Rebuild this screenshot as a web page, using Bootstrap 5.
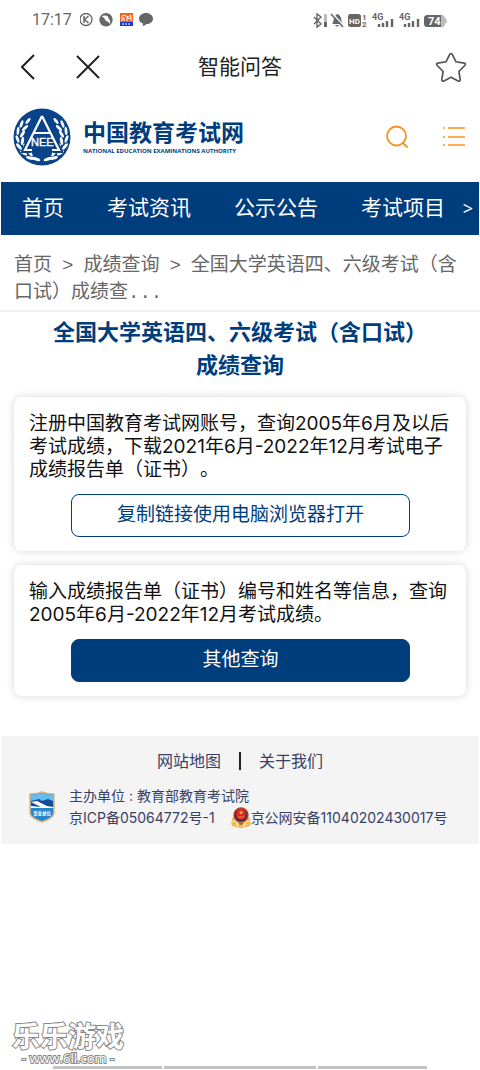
<!DOCTYPE html>
<html lang="zh-CN">
<head>
<meta charset="utf-8">
<meta name="viewport" content="width=device-width, initial-scale=1">
<title>智能问答</title>
<link href="https://cdn.jsdelivr.net/npm/bootstrap@5.3.0/dist/css/bootstrap.min.css" rel="stylesheet">
<style>
:root { --brand: #003d7d; --accent: #f7931e; }
body { font-family: Inter, "Noto Sans CJK SC", sans-serif; color: #111; background: #fff; text-spacing-trim: space-all; }
a { text-decoration: none; }
svg { display: block; flex: none; }
.icon-btn { background: none; border: 0; padding: 0; }
.status-bar { height: 38px; padding: 2px 32px 0; color: #666; font: 16px/1 Roboto, sans-serif; }
.title-bar { height: 58px; padding: 0 13px; }
.page-name { font-size: 21px; line-height: 30px; color: #222; }
.side-box { width: 100px; gap: 37px; }
.brand-bar { height: 86px; padding: 0 14px 4px 13px; }
.brand-link, .brand-link:hover { color: var(--brand); gap: 12px; }
.brand-cn { font-size: 23px; line-height: 28px; font-weight: 700; }
.brand-en { font: 700 6px/9px "Open Sans", sans-serif; white-space: nowrap; }
.main-nav { background: var(--brand); height: 53px; margin: 0 1px; padding: 0 6px 2px 21px; font-size: 21px; white-space: nowrap; }
.main-nav a { color: #fff; }
.nav-items { gap: 43px; }
.nav-more { font-size: 18px; line-height: 24px; font-family: "Noto Sans", sans-serif; color: #fff; }
.crumbs { padding: 18px 14px 3px; font: 19px/27px "Liberation Mono", "Noto Sans CJK SC", monospace; color: #666; border-bottom: 2px solid #f0f0f0; }
.crumbs a { color: inherit; }
.crumbs .sep { margin: 0 10px; }
.headline { font-size: 22px; line-height: 33px; font-weight: 700; color: var(--brand); padding: 0 50px; margin: 4px 0 15px; }
.query-card { border: 0; border-radius: 8px; box-shadow: 0 0 8px rgba(0,0,0,.17); margin: 0 14px 14px; padding: 15px 14px 14px 15px; font-size: 19px; line-height: 23px; }
.query-card p { margin: 0 0 13px; }
.query-btn { --bs-btn-border-radius: 8px; --bs-btn-color: var(--brand); --bs-btn-border-color: var(--brand); --bs-btn-hover-color: #fff; --bs-btn-hover-bg: var(--brand); width: 80%; height: 43px; padding: 0 0 2px; font-size: 19px; line-height: 36px; margin: 0 auto; }
.query-btn.solid { background: var(--brand); color: #fff; }
.site-footer { background: #f4f4f4; margin: 26px 1px 0; padding: 13px 28px 15px; font-size: 14px; line-height: 22px; color: #374166; }
.site-footer a { color: inherit; }
.foot-links { font-size: 16px; line-height: 24px; gap: 18px; margin-bottom: 12px; }
.foot-bar { width: 2px; height: 18px; background: #222; }
.foot-org { gap: 14px; }
.watermark { width: 112px; margin-left: 12px; color: #fff; white-space: nowrap; paint-order: stroke fill; -webkit-text-stroke: 2px #888; }
.mark-cn { font-size: 28px; line-height: 28px; font-weight: 700; }
.mark-en { font: 400 13px/15px "Open Sans", sans-serif; }
.home-strips { gap: 2px; margin: 0 53px 1px; }
.home-strips span { height: 3px; background: #c2c2c2; flex: 5 1 0; }
.home-strips .wide { flex-grow: 7; }
</style>
</head>
<body class="d-flex flex-column min-vh-100">
<div class="status-bar d-flex align-items-center justify-content-between">
  <div class="d-flex align-items-center gap-2">
    <span>17:17</span>
    <svg width="75" height="15" viewBox="0 0 75 15">
      <circle cx="6" cy="6.5" r="6" fill="none" stroke="#666" stroke-width="1.3"/>
      <path d="M4 3v7M8.500 3L4.500 6.500 8.500 10" fill="none" stroke="#666" stroke-width="1.5"/>
      <circle cx="26" cy="6.700" r="6.700" fill="#666"/>
      <path d="M21.500 3q4-1 6 0l1 2q2 2 1.500 6-2-3-4-3-1-3-4.500-5z" fill="#fff"/>
      <path d="M40 0h13v9H40z" fill="#f4601c"/><path d="M40 9h13v4H40z" fill="#1739d6"/>
      <path d="M42 8V3q2-2 4 0t5-1v6M44 8V4m3 4V4l2 2 2-2" stroke="#fff" stroke-width="1" fill="none"/>
      <path d="M42 11h9" stroke="#fff" stroke-dasharray="2 1"/>
      <path d="M66 0c4 0 7 2.500 7 5.700S70 11 66.500 11c-1 1.300-2.500 2-4.500 2 1-.8 1.200-1.600 1-2.500-2.500-.8-4-2.600-4-4.800C59 2.500 62 0 66 0z" fill="#666"/>
    </svg>
  </div>
  <svg width="136" height="17" viewBox="0 0 136 17" font-family="Roboto, sans-serif" font-weight="700">
    <path d="M2 5l7 7-4 3V2l4 3-7 7" fill="none" stroke="#666" stroke-width="1.400"/>
    <path d="M12 2h3v8h-3z" fill="#bbb"/><path d="M12 10h3v5h-3z" fill="#666"/>
    <path d="M20 12c2-1 1-7 4-9 1-1.500 2-1.500 3 0 3 2 2 8 4 9zM23 13h4q-2 3-4 0" fill="#666"/>
    <path d="M20 1l12 13" stroke="#fff" stroke-width="1.500"/><path d="M19 2l12 13" stroke="#666" stroke-width="1.500"/>
    <rect x="36" y="2" width="13" height="13" rx="2.500" fill="#666"/>
    <text x="37" y="12" font-size="8" fill="#fff">HD</text>
    <text x="50" y="8" font-size="8" fill="#666">1</text><text x="50" y="15" font-size="8" fill="#666">2</text>
    <text x="60" y="8" font-size="9" fill="#666">4G</text><text x="87" y="8" font-size="9" fill="#666">4G</text>
    <path d="M67 15v-3M71 15v-4M75 15V9M80 15V7M93 15v-3M97 15v-4M101 15V9M106 15V7" stroke="#666" stroke-width="2.400"/>
    <rect x="112" y="3" width="21" height="12" rx="3.500" fill="#bbb"/><path d="M133 6q4 3 0 6z" fill="#bbb"/>
    <path d="M115.500 3H129v12h-13.500a3.500 3.500 0 0 1-3.500-3.500v-5A3.500 3.500 0 0 1 115.500 3z" fill="#666"/>
    <text x="116" y="13" font-size="11" fill="#fff">74</text>
  </svg>
</div>

<header class="title-bar d-flex align-items-center justify-content-between">
  <div class="side-box d-flex align-items-center ps-2">
    <button class="icon-btn" aria-label="返回"><svg width="17" height="28" viewBox="0 0 17 28"><path d="M13 2L1 14l12 12" fill="none" stroke="#222" stroke-width="2"/></svg></button>
    <button class="icon-btn" aria-label="关闭"><svg width="26" height="26" viewBox="0 0 26 26"><path d="M2 2l22 22M24 2L2 24" fill="none" stroke="#222" stroke-width="2"/></svg></button>
  </div>
  <span class="page-name">智能问答</span>
  <div class="side-box d-flex justify-content-end">
    <button class="icon-btn" aria-label="收藏"><svg width="32" height="32" viewBox="0 0 32 32"><path d="M14.700 3.500q1.300-2 2.600 0l3.700 7.300 8.200 1.300q2 .6.600 2.400l-5.900 6 1.300 8q0 2.200-2.200 1.500L16 26.300 9 30q-2.200.7-2.200-1.500l1.300-8-5.900-6q-1.400-1.800.6-2.400l8.200-1.300z" fill="none" stroke="#555" stroke-width="1.700"/></svg></button>
  </div>
</header>

<div class="brand-bar d-flex align-items-center justify-content-between">
  <a href="#" class="brand-link d-flex align-items-center">
    <svg width="58" height="58" viewBox="0 0 58 58">
      <defs><g id="leaves" fill="#fff">
        <ellipse cx="23" cy="51" rx="4.500" ry="1.500" transform="rotate(20 23 51)"/>
        <ellipse cx="17" cy="50" rx="4" ry="1.500" transform="rotate(15 17 50)"/>
        <ellipse cx="17" cy="45" rx="4" ry="1.500" transform="rotate(55 17 45)"/>
        <ellipse cx="10.500" cy="45" rx="4" ry="1.500" transform="rotate(30 10.500 45)"/>
        <ellipse cx="12" cy="39.500" rx="4" ry="1.500" transform="rotate(75 12 39.500)"/>
        <ellipse cx="6" cy="38.500" rx="4" ry="1.500" transform="rotate(50 6 38.500)"/>
        <ellipse cx="9.500" cy="33" rx="4" ry="1.500" transform="rotate(100 9.500 33)"/>
        <ellipse cx="4.500" cy="31" rx="4" ry="1.400" transform="rotate(70 4.500 31)"/>
        <ellipse cx="9.500" cy="26" rx="4" ry="1.500" transform="rotate(120 9.500 26)"/>
        <ellipse cx="5" cy="23" rx="4" ry="1.400" transform="rotate(95 5 23)"/>
        <ellipse cx="12" cy="20" rx="4" ry="1.500" transform="rotate(135 12 20)"/>
        <ellipse cx="8.500" cy="16" rx="4" ry="1.400" transform="rotate(110 8.500 16)"/>
        <ellipse cx="15" cy="13" rx="3.500" ry="1.400" transform="rotate(130 15 13)"/>
      </g></defs>
      <circle cx="29" cy="29" r="28.500" fill="#0b438a"/>
      <use href="#leaves"/><use href="#leaves" transform="matrix(-1 0 0 1 58 0)"/>
      <path d="M29 8L12 42h6M29 8l17 34h-6M22 26h14" fill="none" stroke="#0b438a" stroke-width="6"/>
      <path d="M29 8L12 42h7M29 8l17 34h-7M21 25h16" fill="none" stroke="#fff" stroke-width="2.200"/>
      <text x="18" y="38" font-family="Liberation Sans, sans-serif" font-size="11" fill="#fff" stroke="#fff" stroke-width=".4">NEE</text>
    </svg>
    <span class="d-flex flex-column"><span class="brand-cn">中国教育考试网</span><span class="brand-en">NATIONAL EDUCATION EXAMINATIONS AUTHORITY</span></span>
  </a>
  <div class="d-flex align-items-center gap-4">
    <button class="icon-btn me-2" aria-label="搜索"><svg width="24" height="24" viewBox="0 0 24 24"><circle cx="10.500" cy="11" r="9.500" fill="none" stroke="#f7931e" stroke-width="1.800"/><path d="M16.500 17.500l5 5" stroke="#f7931e" stroke-width="1.800"/></svg></button>
    <button class="icon-btn" aria-label="菜单"><svg width="24" height="22" viewBox="0 0 24 22"><path d="M6 2h17M6 11h17M6 19h17M1 2h2M1 11h2M1 19h2" stroke="#f7931e" stroke-width="1.500"/></svg></button>
  </div>
</div>

<nav class="main-nav d-flex align-items-center justify-content-between">
  <div class="nav-items d-flex"><a href="#">首页</a><a href="#">考试资讯</a><a href="#">公示公告</a><a href="#">考试项目</a></div>
  <button class="icon-btn nav-more" aria-label="更多栏目">&gt;</button>
</nav>

<div class="crumbs"><a href="#">首页</a><span class="sep">&gt;</span><a href="#">成绩查询</a><span class="sep">&gt;</span><span>全国大学英语四、六级考试（含</span><span>口试）成绩查...</span></div>

<main>
  <h1 class="headline text-center">全国大学英语四、六级考试（含口试）<br>成绩查询</h1>
  <section class="card query-card">
    <p>注册中国教育考试网账号，查询2005年6月及以后考试成绩，下载2021年6月-2022年12月考试电子成绩报告单（证书）。</p>
    <button class="btn query-btn">复制链接使用电脑浏览器打开</button>
  </section>
  <section class="card query-card">
    <p>输入成绩报告单（证书）编号和姓名等信息，查询2005年6月-2022年12月考试成绩。</p>
    <button class="btn query-btn solid">其他查询</button>
  </section>
</main>

<footer class="site-footer">
  <div class="foot-links d-flex justify-content-center align-items-center"><a href="#">网站地图</a><span class="foot-bar"></span><a href="#">关于我们</a></div>
  <div class="foot-org d-flex align-items-center">
    <svg width="26" height="32" viewBox="0 0 26 32">
      <path d="M1 3q7 0 12-2 5 2 12 2v19q0 5-12 9Q1 27 1 22z" fill="#2584cb" stroke="#dfb98a" stroke-width="1.600"/>
      <path d="M2 4q6 0 11-2 5 2 11 2v7H2z" fill="#64bdf0"/>
      <path d="M2 10l8-2 3 2 6-2 5 2v7H2z" fill="#174c98"/><path d="M2 11l6-1 10 5 6 1v1H2v-2l10 1-6-3z" fill="#fff"/>
      <text x="4" y="24" font-family="Noto Sans CJK SC, sans-serif" font-size="4.500" font-weight="700" fill="#fff">事业单位</text>
    </svg>
    <div>
      <div>主办单位 : 教育部教育考试院</div>
      <div class="d-flex flex-wrap align-items-center">
        <a href="#" class="me-3">京ICP备05064772号-1</a>
        <a href="#" class="d-flex align-items-center"><svg width="20" height="22" viewBox="0 0 20 22">
          <path d="M3 9Q-1 14 1 19l4 1q5 2 10 0l4-1q2-5-2-10z" fill="#eab95c"/>
          <path d="M4 13q2 5 6 5t6-5M5 17l3 3M15 17l-3 3M1 15l4-2M19 15l-4-2" fill="none" stroke="#fbe09c" stroke-width="1.300"/>
          <circle cx="10" cy="8" r="7" fill="#1f2750" stroke="#b9482c" stroke-width="1.400"/>
          <path d="M5 6q0-4 5-4t5 4v3q-1 4-5 4T5 9z" fill="#d92a20"/><path d="M10 4l.5 1h1l-.8.700.3 1.100-1-.6-1 .6.300-1.100-.8-.7h1zM7 10h6" fill="#f4b33e" stroke="#f4b33e" stroke-width=".7"/>
          <path d="M8 16l4 2M12 16l-4 2" stroke="#a85a1b" stroke-width="1.200"/>
        </svg>京公网安备11040202430017号</a>
      </div>
    </div>
  </div>
</footer>

<div class="mt-auto">
  <div class="watermark text-center"><div class="mark-cn">乐乐游戏</div><div class="mark-en">- www.6ll.com -</div></div>
  <div class="home-strips d-flex"><span></span><span class="wide"></span><span></span></div>
</div>
<script src="https://cdn.jsdelivr.net/npm/bootstrap@5.3.0/dist/js/bootstrap.bundle.min.js"></script>
</body>
</html>
